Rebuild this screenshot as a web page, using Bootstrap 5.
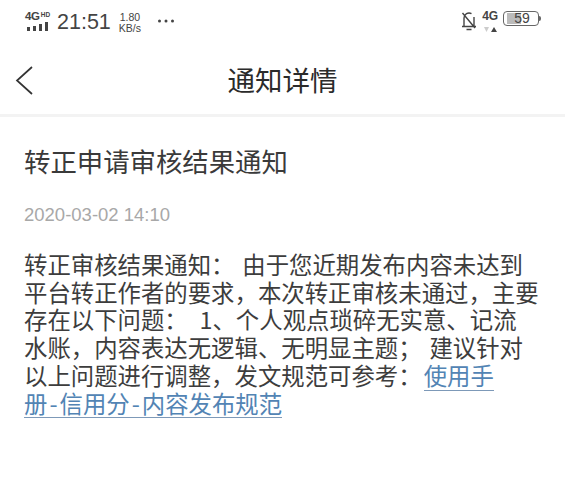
<!doctype html>
<html lang="zh">
<head>
<meta charset="utf-8">
<title>通知详情</title>
<link rel="stylesheet" href="https://cdn.jsdelivr.net/npm/bootstrap@5.3.0/dist/css/bootstrap.min.css">
<style>
html,body{margin:0;background:#fff;overflow:hidden}
body{width:565px;height:500px;font-family:"Liberation Sans","Noto Sans CJK SC",sans-serif;color:#3a3a3a}
.cjk{font-family:"Noto Sans CJK SC","Liberation Sans",sans-serif}
.sbar{height:42px;padding:12px 24px 0 25px;color:#444}
.sig{width:27px;line-height:1}
.sig-top{font-size:11.500px;font-weight:700;line-height:9px;letter-spacing:-.3px;white-space:nowrap}
.sig-hd{font-size:6.500px;position:relative;top:-3px;margin-left:1px;letter-spacing:0}
.clock{font-size:21.500px;line-height:22px;margin-left:5px;margin-top:-1px}
.speed{font-size:10.500px;line-height:11px;margin-left:8px;text-align:center}
.more{margin-left:17px}
.net{font-size:12px;font-weight:700;line-height:11px;text-align:center;width:16px;letter-spacing:-.3px}
.batt{width:36px;height:15px;border:1px solid #666;border-radius:4px;padding:1px;font-size:14px;line-height:11px;text-align:center;padding-left:3px;background:linear-gradient(90deg,#bbb 0,#bbb 50%,#fff 50%);background-clip:content-box}
.nub{width:2px;height:5px;background:#666;border-radius:0 2px 2px 0}
.rgt{gap:5px;margin-top:-1px}
.head{height:75px;border-bottom:3px solid #f3f3f3;padding-top:17px}
.head-title{font-size:27.500px;line-height:40px;color:#2b2b2b;margin:0;font-weight:400}
.back{left:15px;top:24px}
.main{padding:0 20px 0 24px}
.ntitle{font-size:26.400px;line-height:36px;font-weight:400;margin:26px 0 0;color:#3a3a3a}
.ndate{font-family:"Liberation Sans",sans-serif;font-size:18.500px;line-height:20px;color:#a8a8a8;margin-top:26px}
.nbody{font-size:23.400px;line-height:27.700px;color:#3d3d3d;margin:26px 0 0;word-spacing:2.500px}
.nbody a{display:inline-block;color:#5284b4;text-decoration:none;box-shadow:0 1px 0 #7d99b8}
.wide{margin-left:4px}
.lnk1{margin-left:2px}
.hy{padding:0 2px}
</style>
</head>
<body>
<div class="sbar d-flex align-items-start justify-content-between">
  <div class="d-flex align-items-start">
    <div class="sig">
      <div class="sig-top">4G<span class="sig-hd">HD</span></div>
      <svg width="24" height="10" viewBox="0 0 24 10" class="d-block"><path fill="#444" d="M2 5h3v4H2zM8 4h3v5H8zM14 2h3v7h-3zM20 0h3v9h-3z"/></svg>
    </div>
    <div class="clock">21:51</div>
    <div class="speed">1.80<br>KB/s</div>
    <svg class="more" width="16" height="20" viewBox="0 0 16 20" fill="#444"><circle cx="1.500" cy="9" r="1.500"/><circle cx="8" cy="9" r="1.500"/><circle cx="14.500" cy="9" r="1.500"/></svg>
  </div>
  <div class="rgt d-flex align-items-start">
    <svg width="16" height="20" viewBox="0 0 16 20" fill="none" stroke="#444" stroke-width="1.400"><path d="M3 15V7a5 5 0 0 1 7.500-4.300M13 6v9M1 15.500h14M5.500 18.500h5M1.500 2 14 17"/></svg>
    <div class="net">4G<svg width="16" height="7" viewBox="0 0 16 7" class="d-block mt-1"><path fill="#ccc" d="M2 1h5L4.500 6z"/><path fill="#444" d="M9 6h6L12 1z"/></svg></div>
    <div class="d-flex align-items-center">
      <div class="batt">59</div><div class="nub"></div>
    </div>
  </div>
</div>
<header class="head position-relative d-flex justify-content-center align-items-start">
  <svg class="back position-absolute" width="20" height="30" viewBox="0 0 20 30" fill="none" stroke="#333" stroke-width="1.700"><path d="M17 1 2 14.500 17 28"/></svg>
  <h1 class="head-title cjk">通知详情</h1>
</header>
<main class="main cjk">
  <h2 class="ntitle">转正申请审核结果通知</h2>
  <div class="ndate">2020-03-02 14:10</div>
  <p class="nbody">转正审核结果通知： 由于您近期发布内容未达到<br>平台转正作者的要求，本次转正审核未通过，主要<br>存在以下问题： <span class="wide">1、</span>个人观点琐碎无实意、记流<br>水账，内容表达无逻辑、无明显主题； 建议针对<br>以上问题进行调整，发文规范可参考：<a href="#" class="lnk1">使用手</a><br><a href="#">册<span class="hy">-</span>信用分<span class="hy">-</span>内容发布规范</a></p>
</main>
<script src="https://cdn.jsdelivr.net/npm/bootstrap@5.3.0/dist/js/bootstrap.bundle.min.js"></script>
</body>
</html>
